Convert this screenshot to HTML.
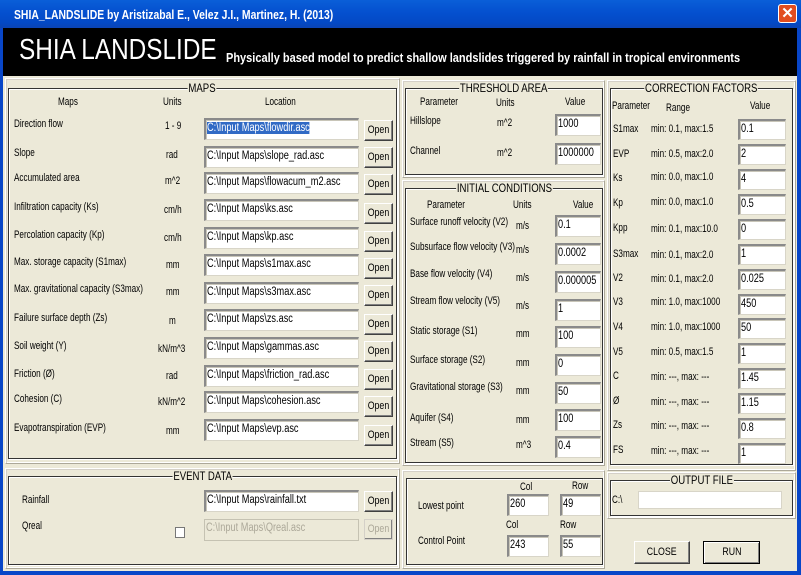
<!DOCTYPE html>
<html><head><meta charset="utf-8"><style>
*{box-sizing:border-box;margin:0;padding:0}
body{width:801px;height:575px;overflow:hidden;background:#ece9d8;position:relative;font-family:"Liberation Sans",Arial,sans-serif;font-size:11px;color:#000}
.a{position:absolute}
.t{position:absolute;white-space:nowrap;transform:scaleX(.74);transform-origin:0 0;line-height:12px}
.fr{position:absolute;border:1px solid #fff;border-right-color:#aca899;border-bottom-color:#aca899;box-shadow:inset 1px 1px 0 #d4d0c8,inset -1px -1px 0 #fff}
.gb{position:absolute;border:1px solid #333;box-shadow:inset 1px 1px 0 #fff,1px 1px 0 #fff}
.lg{position:absolute;top:-7px;left:0;right:0;text-align:center;line-height:12px;font-size:12px}
.lg span{background:#ece9d8;padding:0 1px;display:inline-block;transform:scaleX(.8)}
.in{position:absolute;background:#fff;border:1px solid #d8d5c8;border-top:2px solid #8a8a8a;border-left:2px solid #8a8a8a;box-shadow:inset 1px 1px 0 #c8c5b8}
.in span{position:absolute;left:1px;top:2px;white-space:nowrap;transform:scaleX(.8);transform-origin:0 0;line-height:12px;font-size:11.5px}
.bt{position:absolute;background:#ece9d8;border:1px solid #fff;border-right:1px solid #404040;border-bottom:1px solid #404040;box-shadow:inset -1px -1px 0 #808080;text-align:center;line-height:18px}
.bt span{display:inline-block;transform:scaleX(.8)}
.dis{background:#ece9d8;box-shadow:none}
</style></head><body>
<div class="a" style="left:0;top:0;width:801px;height:28px;background:linear-gradient(#0a5fd8,#0551d0 40%,#0349c6 80%,#0a44b4)"></div>
<div class="t" style="left:14px;top:8px;color:#fff;font-weight:bold;font-size:13px;line-height:14px;transform:scaleX(.8)">SHIA_LANDSLIDE by Aristizabal E., Velez J.I., Martinez, H. (2013)</div>
<div class="a" style="left:778px;top:4px;width:19px;height:19px;background:#e24d1f;border:1px solid #fff;border-radius:3px;color:#fff;font-weight:bold;font-size:15px;text-align:center;line-height:17px">✕</div>
<div class="a" style="left:0;top:28px;width:3px;height:547px;background:#0846c8"></div>
<div class="a" style="left:797px;top:28px;width:4px;height:547px;background:#0846c8"></div>
<div class="a" style="left:0;top:571px;width:801px;height:4px;background:#0846c8"></div>
<div class="a" style="left:3px;top:28px;width:794px;height:48px;background:#000"></div>
<div class="t" style="left:19px;top:35px;color:#fff;font-size:29px;line-height:31px;transform:scaleX(.84)">SHIA LANDSLIDE</div>
<div class="t" style="left:226px;top:52px;color:#fff;font-weight:bold;font-size:12.5px;transform:scaleX(.88)">Physically based model to predict shallow landslides triggered by rainfall in tropical environments</div>

<div class="fr" style="left:5px;top:78px;width:395px;height:386px"></div>
<div class="gb" style="left:8px;top:88px;width:389px;height:371px"><div class="lg"><span>MAPS</span></div></div>
<div class="t" style="left:58px;top:96px">Maps</div>
<div class="t" style="left:163px;top:96px">Units</div>
<div class="t" style="left:265px;top:96px">Location</div>

<div class="t" style="left:14px;top:118px">Direction flow</div><div class="t" style="left:165px;top:120px">1 - 9</div>
<div class="in" style="left:204px;top:118px;width:155px;height:22px"><span style="background:#316ac5;color:#fff">C:\Input Maps\flowdir.asc</span></div>
<div class="bt" style="left:364px;top:120px;width:29px;height:21px"><span>Open</span></div>

<div class="t" style="left:14px;top:147px">Slope</div><div class="t" style="left:166px;top:149px">rad</div>
<div class="in" style="left:204px;top:146px;width:155px;height:22px"><span>C:\Input Maps\slope_rad.asc</span></div>
<div class="bt" style="left:364px;top:147px;width:29px;height:21px"><span>Open</span></div>

<div class="t" style="left:14px;top:172px">Accumulated area</div><div class="t" style="left:165px;top:175px">m^2</div>
<div class="in" style="left:204px;top:172px;width:155px;height:22px"><span>C:\Input Maps\flowacum_m2.asc</span></div>
<div class="bt" style="left:364px;top:174px;width:29px;height:21px"><span>Open</span></div>

<div class="t" style="left:14px;top:201px">Infiltration capacity (Ks)</div><div class="t" style="left:164px;top:204px">cm/h</div>
<div class="in" style="left:204px;top:199px;width:155px;height:22px"><span>C:\Input Maps\ks.asc</span></div>
<div class="bt" style="left:364px;top:203px;width:29px;height:21px"><span>Open</span></div>

<div class="t" style="left:14px;top:229px">Percolation capacity (Kp)</div><div class="t" style="left:164px;top:232px">cm/h</div>
<div class="in" style="left:204px;top:227px;width:155px;height:22px"><span>C:\Input Maps\kp.asc</span></div>
<div class="bt" style="left:364px;top:231px;width:29px;height:21px"><span>Open</span></div>

<div class="t" style="left:14px;top:256px">Max. storage capacity (S1max)</div><div class="t" style="left:166px;top:259px">mm</div>
<div class="in" style="left:204px;top:254px;width:155px;height:22px"><span>C:\Input Maps\s1max.asc</span></div>
<div class="bt" style="left:364px;top:258px;width:29px;height:21px"><span>Open</span></div>

<div class="t" style="left:14px;top:283px">Max. gravitational capacity (S3max)</div><div class="t" style="left:166px;top:286px">mm</div>
<div class="in" style="left:204px;top:282px;width:155px;height:22px"><span>C:\Input Maps\s3max.asc</span></div>
<div class="bt" style="left:364px;top:285px;width:29px;height:21px"><span>Open</span></div>

<div class="t" style="left:14px;top:312px">Failure surface depth (Zs)</div><div class="t" style="left:169px;top:315px">m</div>
<div class="in" style="left:204px;top:309px;width:155px;height:22px"><span>C:\Input Maps\zs.asc</span></div>
<div class="bt" style="left:364px;top:314px;width:29px;height:21px"><span>Open</span></div>

<div class="t" style="left:14px;top:340px">Soil weight (Y)</div><div class="t" style="left:158px;top:343px">kN/m^3</div>
<div class="in" style="left:204px;top:337px;width:155px;height:22px"><span>C:\Input Maps\gammas.asc</span></div>
<div class="bt" style="left:364px;top:341px;width:29px;height:21px"><span>Open</span></div>

<div class="t" style="left:14px;top:368px">Friction (Ø)</div><div class="t" style="left:166px;top:370px">rad</div>
<div class="in" style="left:204px;top:365px;width:155px;height:22px"><span>C:\Input Maps\friction_rad.asc</span></div>
<div class="bt" style="left:364px;top:369px;width:29px;height:21px"><span>Open</span></div>

<div class="t" style="left:14px;top:393px">Cohesion (C)</div><div class="t" style="left:158px;top:396px">kN/m^2</div>
<div class="in" style="left:204px;top:391px;width:155px;height:22px"><span>C:\Input Maps\cohesion.asc</span></div>
<div class="bt" style="left:364px;top:396px;width:29px;height:21px"><span>Open</span></div>

<div class="t" style="left:14px;top:422px">Evapotranspiration (EVP)</div><div class="t" style="left:166px;top:425px">mm</div>
<div class="in" style="left:204px;top:419px;width:155px;height:22px"><span>C:\Input Maps\evp.asc</span></div>
<div class="bt" style="left:364px;top:425px;width:29px;height:21px"><span>Open</span></div>

<div class="fr" style="left:5px;top:468px;width:395px;height:101px"></div>
<div class="gb" style="left:8px;top:476px;width:389px;height:89px"><div class="lg"><span>EVENT DATA</span></div></div>
<div class="t" style="left:22px;top:494px">Rainfall</div>
<div class="in" style="left:204px;top:490px;width:155px;height:22px"><span>C:\Input Maps\rainfall.txt</span></div>
<div class="bt" style="left:364px;top:491px;width:29px;height:21px"><span>Open</span></div>
<div class="t" style="left:22px;top:520px">Qreal</div>
<div class="a" style="left:175px;top:527px;width:10px;height:11px;background:#fff;border:1px solid #777"></div>
<div class="in dis" style="left:204px;top:519px;width:155px;height:22px;border:1px solid #c5c2b2"><span style="color:#aca899">C:\Input Maps\Qreal.asc</span></div>
<div class="bt" style="left:364px;top:519px;width:29px;height:21px;color:#aca899;border-color:#d4d0c8"><span>Open</span></div>

<div class="fr" style="left:402px;top:80px;width:203px;height:98px"></div>
<div class="gb" style="left:405px;top:88px;width:198px;height:87px"><div class="lg"><span>THRESHOLD AREA</span></div></div>
<div class="t" style="left:420px;top:96px">Parameter</div>
<div class="t" style="left:496px;top:97px">Units</div>
<div class="t" style="left:565px;top:96px">Value</div>
<div class="t" style="left:410px;top:115px">Hillslope</div><div class="t" style="left:497px;top:117px">m^2</div>
<div class="in" style="left:555px;top:114px;width:46px;height:22px"><span>1000</span></div>
<div class="t" style="left:410px;top:145px">Channel</div><div class="t" style="left:497px;top:147px">m^2</div>
<div class="in" style="left:555px;top:143px;width:46px;height:22px"><span>1000000</span></div>

<div class="fr" style="left:402px;top:180px;width:203px;height:286px"></div>
<div class="gb" style="left:405px;top:188px;width:198px;height:275px"><div class="lg"><span>INITIAL CONDITIONS</span></div></div>
<div class="t" style="left:427px;top:199px">Parameter</div>
<div class="t" style="left:513px;top:199px">Units</div>
<div class="t" style="left:573px;top:199px">Value</div>
<div class="t" style="left:410px;top:216px">Surface runoff velocity (V2)</div><div class="t" style="left:516px;top:220px">m/s</div>
<div class="in" style="left:555px;top:215px;width:46px;height:22px"><span>0.1</span></div>
<div class="t" style="left:410px;top:241px">Subsurface flow velocity (V3)</div><div class="t" style="left:516px;top:244px">m/s</div>
<div class="in" style="left:555px;top:243px;width:46px;height:22px"><span>0.0002</span></div>
<div class="t" style="left:410px;top:268px">Base flow velocity (V4)</div><div class="t" style="left:516px;top:272px">m/s</div>
<div class="in" style="left:555px;top:271px;width:46px;height:22px"><span>0.000005</span></div>
<div class="t" style="left:410px;top:295px">Stream flow velocity (V5)</div><div class="t" style="left:516px;top:300px">m/s</div>
<div class="in" style="left:555px;top:299px;width:46px;height:22px"><span>1</span></div>
<div class="t" style="left:410px;top:325px">Static storage (S1)</div><div class="t" style="left:516px;top:328px">mm</div>
<div class="in" style="left:555px;top:326px;width:46px;height:22px"><span>100</span></div>
<div class="t" style="left:410px;top:354px">Surface storage (S2)</div><div class="t" style="left:516px;top:357px">mm</div>
<div class="in" style="left:555px;top:354px;width:46px;height:22px"><span>0</span></div>
<div class="t" style="left:410px;top:381px">Gravitational storage (S3)</div><div class="t" style="left:516px;top:385px">mm</div>
<div class="in" style="left:555px;top:382px;width:46px;height:22px"><span>50</span></div>
<div class="t" style="left:410px;top:412px">Aquifer (S4)</div><div class="t" style="left:516px;top:414px">mm</div>
<div class="in" style="left:555px;top:409px;width:46px;height:22px"><span>100</span></div>
<div class="t" style="left:410px;top:437px">Stream (S5)</div><div class="t" style="left:516px;top:439px">m^3</div>
<div class="in" style="left:555px;top:436px;width:46px;height:22px"><span>0.4</span></div>

<div class="fr" style="left:402px;top:470px;width:203px;height:99px"></div>
<div class="gb" style="left:406px;top:478px;width:197px;height:87px"></div>
<div class="t" style="left:520px;top:481px">Col</div>
<div class="t" style="left:572px;top:480px">Row</div>
<div class="t" style="left:418px;top:500px">Lowest point</div>
<div class="in" style="left:507px;top:494px;width:42px;height:22px"><span>260</span></div>
<div class="in" style="left:560px;top:494px;width:41px;height:22px"><span>49</span></div>
<div class="t" style="left:506px;top:519px">Col</div>
<div class="t" style="left:560px;top:519px">Row</div>
<div class="t" style="left:418px;top:535px">Control Point</div>
<div class="in" style="left:507px;top:535px;width:42px;height:22px"><span>243</span></div>
<div class="in" style="left:560px;top:535px;width:41px;height:22px"><span>55</span></div>

<div class="fr" style="left:607px;top:80px;width:189px;height:391px"></div>
<div class="gb" style="left:610px;top:88px;width:183px;height:377px"><div class="lg"><span>CORRECTION FACTORS</span></div></div>
<div class="t" style="left:612px;top:100px">Parameter</div>
<div class="t" style="left:666px;top:102px">Range</div>
<div class="t" style="left:750px;top:100px">Value</div>

<div class="t" style="left:613px;top:123px">S1max</div><div class="t" style="left:651px;top:123px">min: 0.1, max:1.5</div><div class="in" style="left:738px;top:119px;width:48px;height:21px"><span>0.1</span></div>
<div class="t" style="left:613px;top:148px">EVP</div><div class="t" style="left:651px;top:148px">min: 0.5, max:2.0</div><div class="in" style="left:738px;top:144px;width:48px;height:21px"><span>2</span></div>
<div class="t" style="left:613px;top:172px">Ks</div><div class="t" style="left:651px;top:171px">min: 0.0, max:1.0</div><div class="in" style="left:738px;top:169px;width:48px;height:21px"><span>4</span></div>
<div class="t" style="left:613px;top:197px">Kp</div><div class="t" style="left:651px;top:196px">min: 0.0, max:1.0</div><div class="in" style="left:738px;top:194px;width:48px;height:21px"><span>0.5</span></div>
<div class="t" style="left:613px;top:222px">Kpp</div><div class="t" style="left:651px;top:223px">min: 0.1, max:10.0</div><div class="in" style="left:738px;top:219px;width:48px;height:21px"><span>0</span></div>
<div class="t" style="left:613px;top:248px">S3max</div><div class="t" style="left:651px;top:249px">min: 0.1, max:2.0</div><div class="in" style="left:738px;top:244px;width:48px;height:21px"><span>1</span></div>
<div class="t" style="left:613px;top:272px">V2</div><div class="t" style="left:651px;top:273px">min: 0.1, max:2.0</div><div class="in" style="left:738px;top:269px;width:48px;height:21px"><span>0.025</span></div>
<div class="t" style="left:613px;top:296px">V3</div><div class="t" style="left:651px;top:296px">min: 1.0, max:1000</div><div class="in" style="left:738px;top:294px;width:48px;height:21px"><span>450</span></div>
<div class="t" style="left:613px;top:321px">V4</div><div class="t" style="left:651px;top:321px">min: 1.0, max:1000</div><div class="in" style="left:738px;top:318px;width:48px;height:21px"><span>50</span></div>
<div class="t" style="left:613px;top:346px">V5</div><div class="t" style="left:651px;top:346px">min: 0.5, max:1.5</div><div class="in" style="left:738px;top:343px;width:48px;height:21px"><span>1</span></div>
<div class="t" style="left:613px;top:370px">C</div><div class="t" style="left:651px;top:371px">min: ---, max: ---</div><div class="in" style="left:738px;top:368px;width:48px;height:21px"><span>1.45</span></div>
<div class="t" style="left:613px;top:395px">Ø</div><div class="t" style="left:651px;top:396px">min: ---, max: ---</div><div class="in" style="left:738px;top:393px;width:48px;height:21px"><span>1.15</span></div>
<div class="t" style="left:613px;top:419px">Zs</div><div class="t" style="left:651px;top:420px">min: ---, max: ---</div><div class="in" style="left:738px;top:418px;width:48px;height:21px"><span>0.8</span></div>
<div class="t" style="left:613px;top:444px">FS</div><div class="t" style="left:651px;top:445px">min: ---, max: ---</div><div class="in" style="left:738px;top:443px;width:48px;height:21px"><span>1</span></div>

<div class="fr" style="left:607px;top:472px;width:189px;height:47px"></div>
<div class="gb" style="left:610px;top:480px;width:183px;height:36px"><div class="lg"><span>OUTPUT FILE</span></div></div>
<div class="t" style="left:612px;top:494px">C:\</div>
<div class="a" style="left:638px;top:491px;width:144px;height:18px;background:#fff;border:1px solid #d8d5c8"></div>

<div class="bt" style="left:634px;top:541px;width:56px;height:23px;line-height:21px"><span>CLOSE</span></div>
<div class="bt" style="left:703px;top:541px;width:57px;height:23px;line-height:21px;border:1px solid #000;box-shadow:inset 1px 1px 0 #fff,inset -1px -1px 0 #808080"><span>RUN</span></div>
</body></html>
